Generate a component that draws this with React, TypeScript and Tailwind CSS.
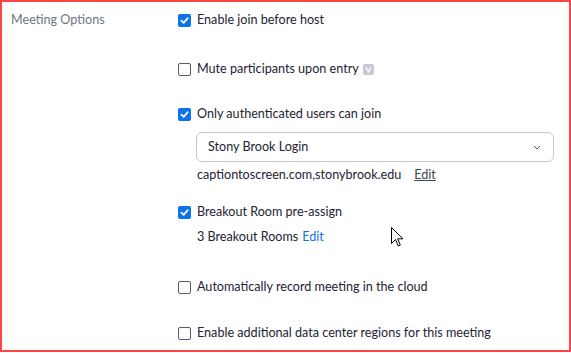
// Zoom-style meeting options panel

function Check({ checked }: { checked?: boolean }) {
  if (checked) {
    return (
      <span className="flex h-[13px] w-[13px] shrink-0 items-center justify-center rounded-[2px] bg-[#0e72ed]">
        <svg width="9" height="9" viewBox="0 0 10 10" fill="none">
          <path d="M1.5 5.2 L4 7.6 L8.6 2.4" stroke="white" strokeWidth="1.9" strokeLinecap="round" strokeLinejoin="round" />
        </svg>
      </span>
    );
  }
  return <span className="h-[13px] w-[13px] shrink-0 rounded-[2px] border border-[#5a5a66] bg-white" />;
}

function Row({ checked, children, className = '' }: { checked?: boolean; children: React.ReactNode; className?: string }) {
  return (
    <div className={`flex h-5 items-center ${className}`}>
      <Check checked={checked} />
      <span className="ml-[6px] flex items-center">{children}</span>
    </div>
  );
}

export default function App() {
  return (
    <div
      className="relative h-[352px] w-[571px] overflow-hidden border-2 border-[#ff4646] bg-white text-[12.6px] leading-5 text-[#232333]"
      style={{ fontFamily: 'Lato, "Open Sans", sans-serif' }}
    >
      <div className="flex pt-[8px]">
        <div className="w-[176px] shrink-0 pl-[9px] text-[#6e7680]">Meeting Options</div>
        <div className="flex flex-col">
          <Row checked>Enable join before host</Row>
          <Row className="mt-[29px]">
            Mute participants upon entry
            <span className="ml-[4px] flex h-[11px] w-[11px] items-center justify-center rounded-[2px] bg-[#c9c9d6]">
              <svg width="7" height="7" viewBox="0 0 8 8" fill="none">
                <path d="M1 1.5 L4 6.5 L7 1.5" stroke="white" strokeWidth="1.4" />
              </svg>
            </span>
          </Row>
          <Row checked className="mt-[25px]">Only authenticated users can join</Row>
          <div className="ml-[18px] mt-[8px] flex h-[30px] w-[358px] items-center justify-between rounded-[6px] border border-[#c6c6d2] pl-[11px] pr-[12px]">
            <span>Stony Brook Login</span>
            <svg width="8" height="5" viewBox="0 0 8 5" fill="none">
              <path d="M1 1 L4 4 L7 1" stroke="#5a5a66" strokeWidth="1" />
            </svg>
          </div>
          <div className="ml-[19px] mt-[3px] flex h-5 items-center">
            <span>captiontoscreen.com,stonybrook.edu</span>
            <span className="ml-[13px] text-[#444450] underline">Edit</span>
          </div>
          <Row checked className="mt-[17px]">Breakout Room pre-assign</Row>
          <div className="ml-[19px] mt-[5px] flex h-5 items-center">
            <span>3 Breakout Rooms</span>
            <span className="ml-[4px] text-[#0e72ed]">Edit</span>
          </div>
          <Row className="mt-[30px]">Automatically record meeting in the cloud</Row>
          <Row className="mt-[26px]">Enable additional data center regions for this meeting</Row>
        </div>
      </div>
      <svg className="absolute left-[389px] top-[225px]" width="13" height="21" viewBox="0 0 13 21">
        <path d="M0.5 0.5 L0.5 16.5 L4.5 12.5 L7.2 19 L9.3 18.1 L6.7 11.8 L12 11.8 Z" fill="white" stroke="black" strokeWidth="1" strokeLinejoin="miter" />
      </svg>
    </div>
  );
}
